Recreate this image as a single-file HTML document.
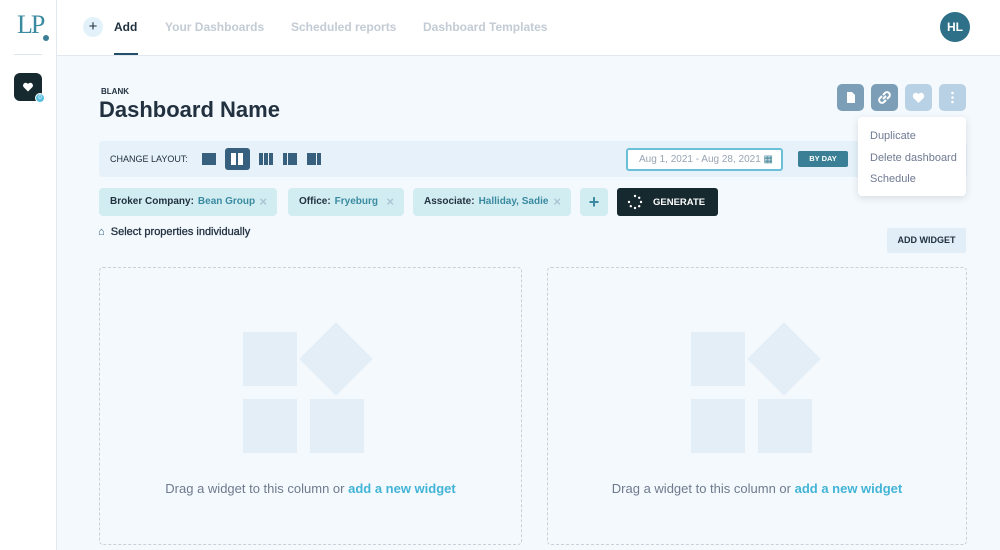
<!DOCTYPE html>
<html><head><meta charset="utf-8"><style>
*{box-sizing:border-box;margin:0;padding:0}
body{width:1000px;height:550px;overflow:hidden;background:#f4f9fe;font-family:"Liberation Sans",sans-serif;position:relative;color:#1e2b3a}
.abs{position:absolute}
#side{left:0;top:0;width:57px;height:550px;background:#fff;border-right:1px solid #e3e8ee}
#top{left:57px;top:0;width:943px;height:56px;background:#fff;border-bottom:1px solid #e3e8ee}
.tab{position:absolute;top:20px;font-size:12px;font-weight:bold;color:#c3cbd4}
.chip{position:absolute;top:188px;height:28px;background:#d2edf2;border-radius:4px;font-size:10px;font-weight:bold;line-height:28px;padding-left:11px;color:#22313f}
.chip b{color:#3a8aa0;margin-left:4px}
.chip i{font-style:normal;color:#a9c6d3;position:absolute;right:10px;font-size:13px}
.ib{position:absolute;top:84px;width:27px;height:27px;border-radius:5px}
.box{position:absolute;top:267px;height:278px;border:1.5px dashed #c9d0da;border-radius:4px}
.sq{position:absolute;width:54px;height:54px;background:#e4eef7}
.dt{position:absolute;top:481px;width:100%;text-align:center;font-size:13px;color:#6f7a8c}
.dt b{color:#42b4d6}
</style></head><body>
<div id="side" class="abs">
 <div class="abs" style="left:17px;top:10px;font-family:'Liberation Serif',serif;font-size:26px;color:#3a8aa0;letter-spacing:-2px">LP</div>
 <div class="abs" style="left:43px;top:35px;width:6px;height:6px;border-radius:50%;background:#3a7f95"></div>
 <div class="abs" style="left:14px;top:54px;width:28px;height:1px;background:#e0e5ea"></div>
 <div class="abs" style="left:14px;top:73px;width:28px;height:28px;border-radius:6px;background:#16292f"></div>
 <svg class="abs" style="left:22px;top:81px" width="12" height="12" viewBox="0 0 24 24"><path d="M12 21l-9-9a5 5 0 0 1 9-6a5 5 0 0 1 9 6z" fill="#fff"/></svg>
 <div class="abs" style="left:35px;top:93px;width:10px;height:10px;border-radius:50%;background:#5bbfe0;border:1px solid #fff;font-size:6px;color:#fff;text-align:center;line-height:8px">0</div>
</div>
<div id="top" class="abs">
 <div class="abs" style="left:26px;top:17px;width:20px;height:20px;border-radius:50%;background:#e3f2fa;text-align:center;line-height:19px;font-size:15px;color:#22313f">+</div>
 <div class="tab" style="left:57px;color:#22313f">Add</div>
 <div class="abs" style="left:57px;top:53px;width:24px;height:2px;background:#22506a"></div>
 <div class="tab" style="left:108px">Your Dashboards</div>
 <div class="tab" style="left:234px">Scheduled reports</div>
 <div class="tab" style="left:366px">Dashboard Templates</div>
 <div class="abs" style="left:883px;top:12px;width:30px;height:30px;border-radius:50%;background:#2d7088;color:#fff;font-size:12px;font-weight:bold;text-align:center;line-height:30px">HL</div>
</div>
<div class="abs" style="left:101px;top:87px;font-size:8px;font-weight:bold;color:#22313f">BLANK</div>
<div class="abs" style="left:99px;top:97px;font-size:22px;font-weight:bold;color:#22313f">Dashboard Name</div>
<div class="ib" style="left:837px;background:#7c9fb7"><svg width="27" height="27" viewBox="0 0 27 27"><path d="M10 8h5l3 3v8h-8z" fill="#fff"/></svg></div>
<div class="ib" style="left:871px;background:#7c9fb7"><svg width="27" height="27" viewBox="0 0 27 27" fill="none" stroke="#fff" stroke-width="2"><path d="M12 15l3-3"/><path d="M11 12l-2 2a2.5 2.5 0 0 0 4 4l2-2"/><path d="M16 15l2-2a2.5 2.5 0 0 0-4-4l-2 2"/></svg></div>
<div class="ib" style="left:905px;background:#b8d1e4"><svg width="27" height="27" viewBox="0 0 27 27"><path d="M13.5 19l-5-5a3 3 0 0 1 5-4a3 3 0 0 1 5 4z" fill="#fff"/></svg></div>
<div class="ib" style="left:939px;background:#b8d1e4"><svg width="27" height="27"><circle cx="13.5" cy="9" r="1.3" fill="#fff"/><circle cx="13.5" cy="13.5" r="1.3" fill="#fff"/><circle cx="13.5" cy="18" r="1.3" fill="#fff"/></svg></div>
<div class="abs" style="left:99px;top:141px;width:868px;height:36px;background:#e6f1f9;border-radius:4px"></div>
<div class="abs" style="left:110px;top:154px;font-size:9px;color:#22313f">CHANGE LAYOUT:</div>
<div class="abs" style="left:202px;top:153px;width:14px;height:12px;background:#36607e"></div>
<div class="abs" style="left:225px;top:148px;width:25px;height:22px;background:#36607e;border-radius:3px"><div class="abs" style="left:6px;top:5px;width:5px;height:12px;background:#fff"></div><div class="abs" style="left:13px;top:5px;width:5px;height:12px;background:#fff"></div></div>
<div class="abs" style="left:259px;top:153px;width:14px;height:12px;background:repeating-linear-gradient(90deg,#36607e 0 4px,transparent 4px 5px)"></div>
<div class="abs" style="left:283px;top:153px;width:14px;height:12px;background:linear-gradient(90deg,#36607e 0 4px,transparent 4px 5px,#36607e 5px)"></div>
<div class="abs" style="left:307px;top:153px;width:14px;height:12px;background:linear-gradient(90deg,#36607e 0 9px,transparent 9px 10px,#36607e 10px)"></div>
<div class="abs" style="left:626px;top:148px;width:157px;height:23px;background:#fff;border:2px solid #6cbfd8;border-radius:3px;font-size:10px;color:#98a3b3;line-height:19px;padding-left:11px">Aug 1, 2021 - Aug 28, 2021<span style="position:absolute;right:8px;color:#3a7f95">&#9638;</span></div>
<div class="abs" style="left:798px;top:151px;width:50px;height:16px;background:#3a7f95;color:#fff;font-size:7.5px;font-weight:bold;text-align:center;line-height:16px;border-radius:2px">BY DAY</div>
<div class="abs" style="left:858px;top:117px;width:108px;height:79px;background:#fff;border-radius:4px;box-shadow:0 2px 8px rgba(0,0,0,.12);font-size:11px;color:#6f7a92;padding:9px 0 0 12px;line-height:21.5px">Duplicate<br>Delete dashboard<br>Schedule</div>
<div class="chip" style="left:99px;width:178px">Broker Company:<b>Bean Group</b><i>×</i></div>
<div class="chip" style="left:288px;width:116px">Office:<b>Fryeburg</b><i>×</i></div>
<div class="chip" style="left:413px;width:158px">Associate:<b>Halliday, Sadie</b><i>×</i></div>
<div class="chip" style="left:580px;width:28px;padding:0;text-align:center;font-size:18px;color:#3a8aa0">+</div>
<div class="abs" style="left:617px;top:188px;width:101px;height:28px;background:#16292f;border-radius:3px;color:#fff;font-size:9.5px;font-weight:bold;line-height:30px;padding-left:36px">GENERATE</div>
<svg class="abs" style="left:627px;top:194px" width="16" height="16"><g fill="#fff"><circle cx="8" cy="2" r="1.2"/><circle cx="12.2" cy="3.8" r="1.2"/><circle cx="14" cy="8" r="1.2"/><circle cx="12.2" cy="12.2" r="1.2"/><circle cx="8" cy="14" r="1.2"/><circle cx="3.8" cy="12.2" r="1.2"/><circle cx="2" cy="8" r="1.2"/></g></svg>
<div class="abs" style="left:98px;top:226px;font-size:11px;color:#22313f;font-weight:bold"><span style="color:#22506a">&#8962;</span>&nbsp; <span style="font-weight:normal;-webkit-text-stroke:.3px #22313f">Select properties individually</span></div>
<div class="abs" style="left:887px;top:228px;width:79px;height:25px;background:#e1eef8;border-radius:2px;font-size:9px;font-weight:bold;text-align:center;line-height:25px;color:#22313f">ADD WIDGET</div>
<div class="box" style="left:99px;width:423px">
 <div class="sq" style="left:143px;top:64px"></div><div class="sq" style="left:143px;top:131px"></div><div class="sq" style="left:210px;top:131px"></div>
 <div class="sq" style="left:210px;top:65px;width:52px;height:52px;transform:rotate(45deg)"></div>
 <div class="dt" style="top:213px">Drag a widget to this column or <b>add a new widget</b></div>
</div>
<div class="box" style="left:547px;width:420px">
 <div class="sq" style="left:143px;top:64px"></div><div class="sq" style="left:143px;top:131px"></div><div class="sq" style="left:210px;top:131px"></div>
 <div class="sq" style="left:210px;top:65px;width:52px;height:52px;transform:rotate(45deg)"></div>
 <div class="dt" style="top:213px">Drag a widget to this column or <b>add a new widget</b></div>
</div>
</body></html>
